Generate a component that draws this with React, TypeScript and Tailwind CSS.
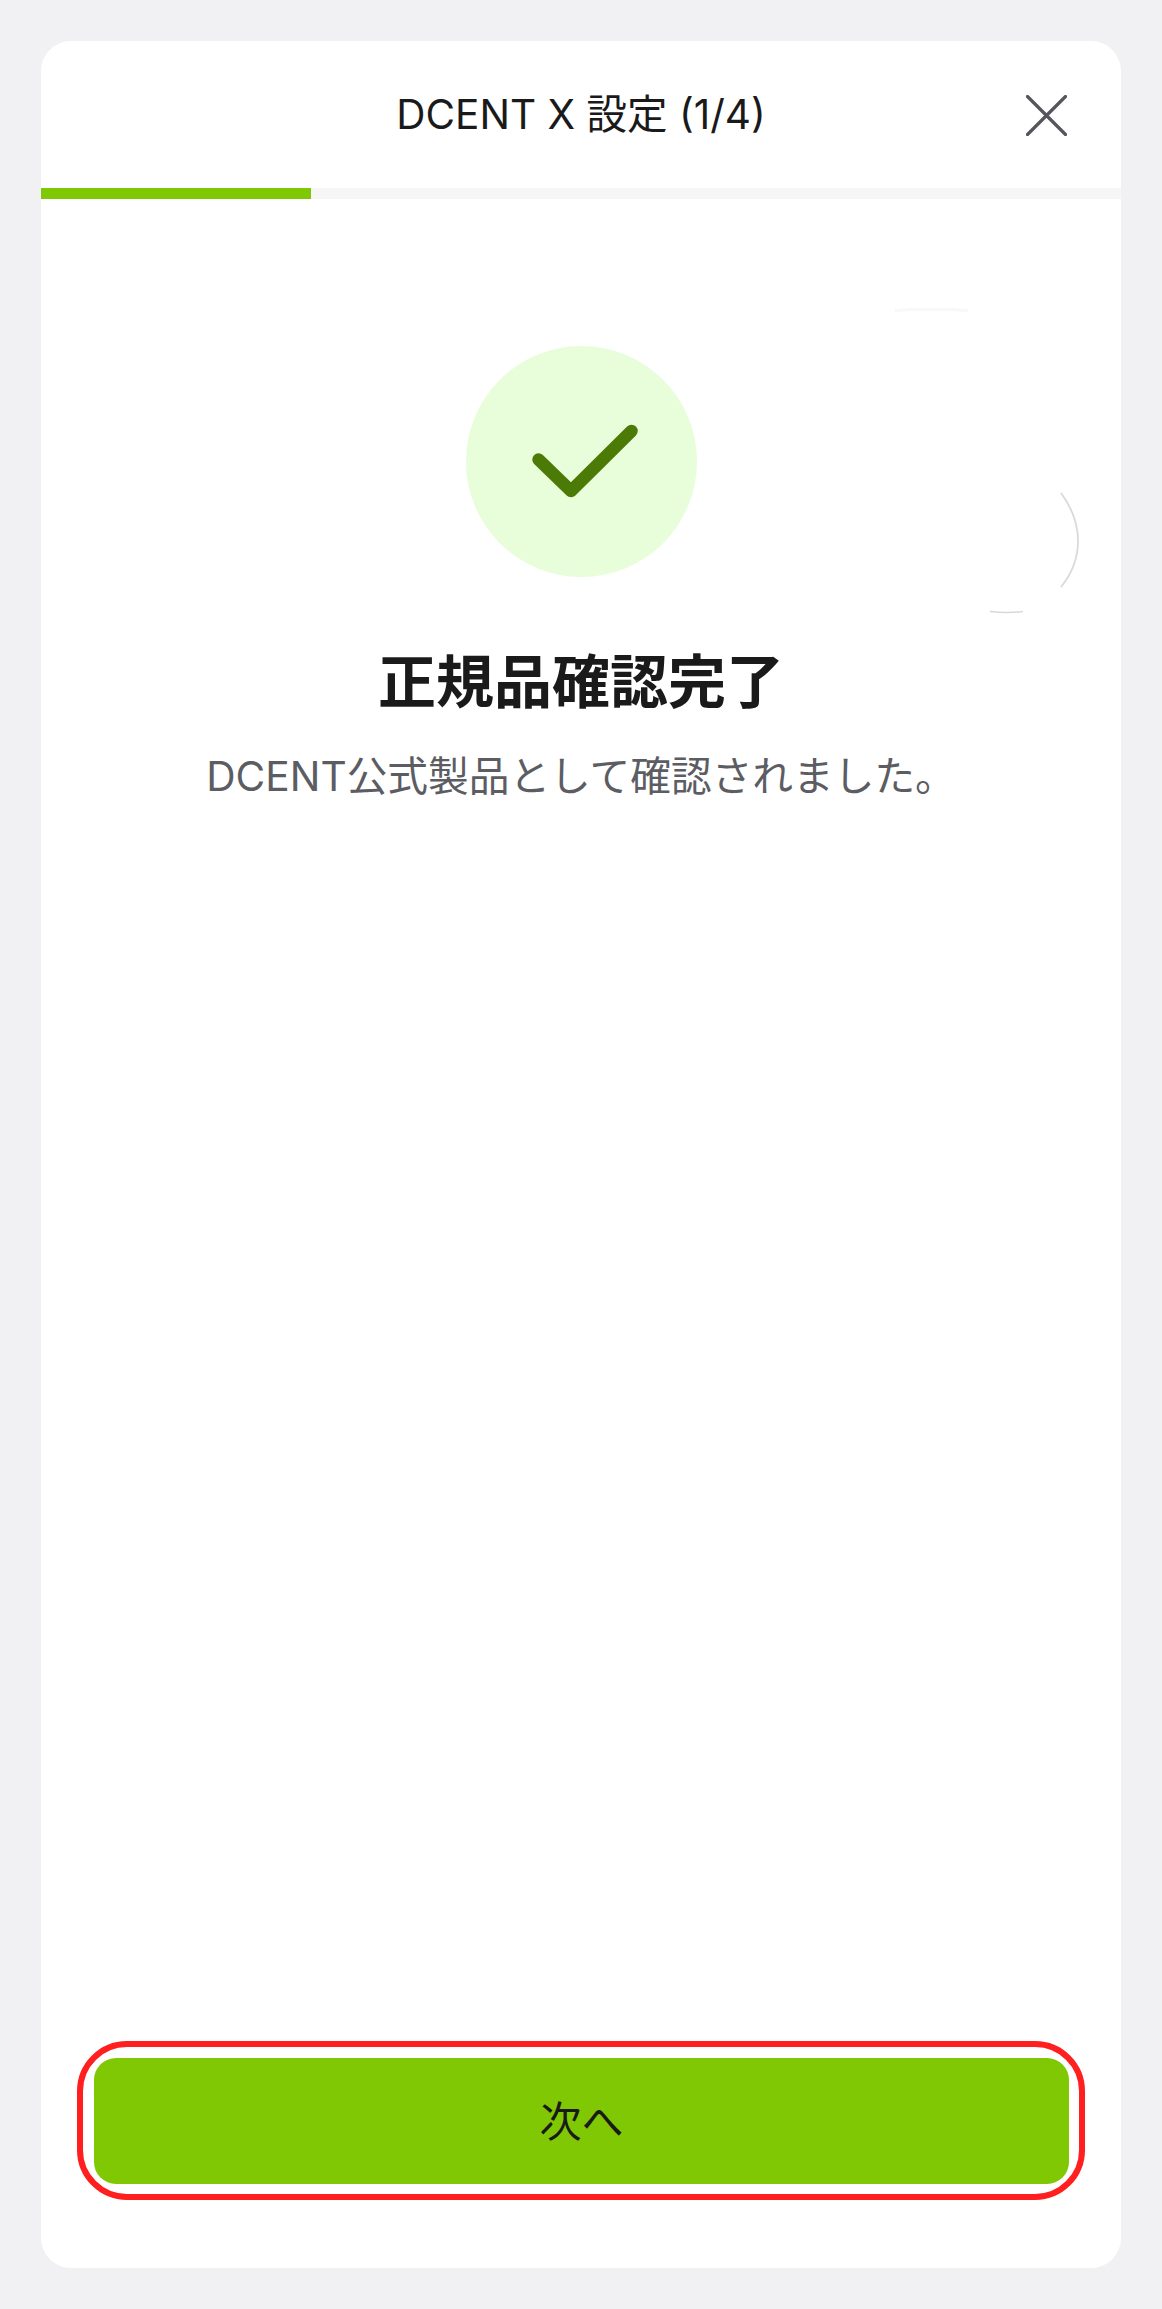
const FONT = "font-[Inter,'Noto_Sans_CJK_JP',sans-serif]"

function RingTraces() {
  return (
    <svg className="absolute left-[779px] top-[249px] pointer-events-none" width="280" height="340" viewBox="820 290 280 340" fill="none">
      <path d="M895 310.5 Q932 308 968 310.5" stroke="#f8f8f9" strokeWidth="3" />
      <path d="M1061 493 Q1078 516 1078 541 Q1078 566 1061 587" stroke="#d9d9de" strokeWidth="1.8" />
      <path d="M990 611.5 Q1007 613.5 1023 611.5" stroke="#d8d8dc" strokeWidth="1.5" />
    </svg>
  )
}

export default function App() {
  return (
    <div className={`${FONT} h-[2309px] bg-[#f1f1f4] p-[41px]`}>
      <div className="relative flex h-[2227px] flex-col rounded-[30px] bg-white overflow-hidden">
        <div className="grid h-[147px] grid-cols-[1fr_auto_1fr] items-center">
          <div />
          <h1 className="text-[40.5px] leading-[60px] text-[#1a1a1a]">DCENT X 設定 (1/4)</h1>
          <div className="flex justify-end pr-[54px]">
            <svg width="41" height="41" viewBox="0 0 41 41" fill="none" stroke="#55565c" strokeWidth="3.2" strokeLinecap="round" className="mt-[1px]">
              <path d="M1.5 1.5 L39.5 39.5 M39.5 1.5 L1.5 39.5" />
            </svg>
          </div>
        </div>

        <div className="h-[11px] bg-[#f6f6f6]">
          <div className="h-full w-[270px] bg-[#81c804]" />
        </div>

        <RingTraces />

        <div className="flex flex-1 flex-col items-center pt-[147px]">
          <div className="flex h-[231px] w-[231px] items-center justify-center rounded-full bg-[#e8fdd9]">
            <svg width="231" height="231" viewBox="466 346 231 231" fill="none" stroke="#4c7a06" strokeWidth="12.5" strokeLinecap="round" strokeLinejoin="round">
              <path d="M538.5 459.5 L571 491 L631.5 431" />
            </svg>
          </div>
          <h2 className="mt-[65px] text-[58px] leading-[80px] font-bold text-[#1a1a1a]">正規品確認完了</h2>
          <p className="mt-[27px] text-[40.7px] leading-[56px] text-[#5c5d63]">DCENT公式製品として確認されました。</p>
        </div>

        <div className="mx-[36px] mb-[68px] rounded-[50px] border-[6px] border-[#ff1f1f] pt-[11px] pr-[10px] pb-[10px] pl-[11px]">
          <button className="flex h-[126px] w-full items-center justify-center rounded-[22px] bg-[#81c804] text-[42px] text-[#1a1a1a]">
            次へ
          </button>
        </div>
      </div>
    </div>
  )
}
